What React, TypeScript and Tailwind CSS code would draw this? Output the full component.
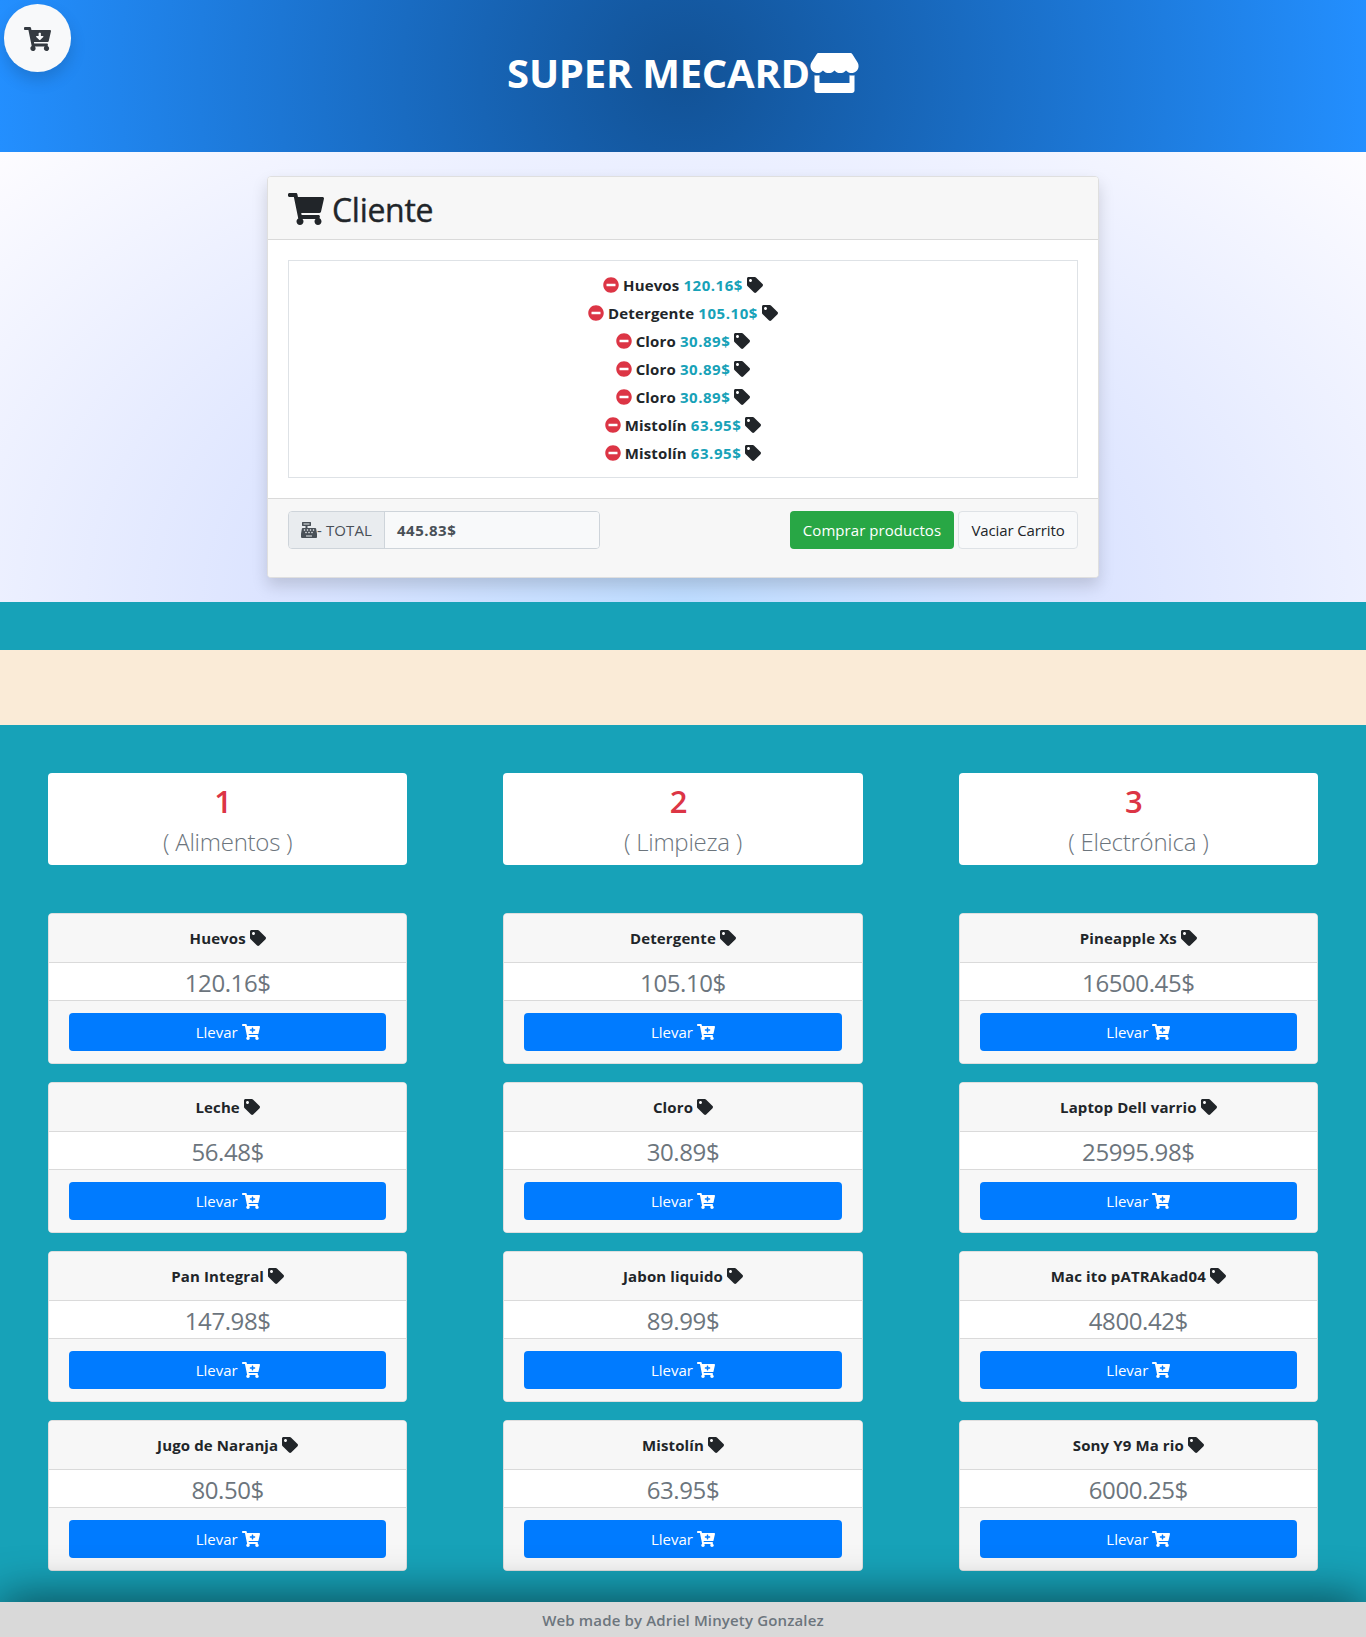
import { FaStore, FaShoppingCart, FaCartArrowDown, FaCartPlus, FaMinusCircle, FaTag, FaCashRegister } from "react-icons/fa";

const cart = [
  ["Huevos", "120.16$"],
  ["Detergente", "105.10$"],
  ["Cloro", "30.89$"],
  ["Cloro", "30.89$"],
  ["Cloro", "30.89$"],
  ["Mistolín", "63.95$"],
  ["Mistolín", "63.95$"],
];

const categories = [
  {
    id: "1",
    name: "Alimentos",
    products: [["Huevos", "120.16$"], ["Leche", "56.48$"], ["Pan Integral", "147.98$"], ["Jugo de Naranja", "80.50$"]],
  },
  {
    id: "2",
    name: "Limpieza",
    products: [["Detergente", "105.10$"], ["Cloro", "30.89$"], ["Jabon liquido", "89.99$"], ["Mistolín", "63.95$"]],
  },
  {
    id: "3",
    name: "Electrónica",
    products: [["Pineapple Xs", "16500.45$"], ["Laptop Dell varrio", "25995.98$"], ["Mac ito pATRAkad04", "4800.42$"], ["Sony Y9 Ma rio", "6000.25$"]],
  },
];

function Product({ name, price }: { name: string; price: string }) {
  return (
    <div className="mb-[18px] flex h-[151px] flex-col overflow-hidden rounded border border-[#dfdfdf] bg-white">
      <div className="flex h-[49px] items-center justify-center gap-1 border-b border-[#dadada] bg-[#f7f7f7]">
        <span className="text-[15px] font-bold tracking-[0.12px]">{name}</span>
        <FaTag className="size-4" />
      </div>
      <div className="flex h-[37px] items-center justify-center pt-0.5 text-[24px] tracking-[-0.4px] text-[#6c757d]">{price}</div>
      <div className="flex-1 border-t border-[#dadada] bg-[#f7f7f7] px-5 pt-3">
        <button className="flex h-[38px] w-full items-center justify-center gap-1 rounded bg-[#007bff] text-[15px] text-white">
          Llevar
          <FaCartPlus className="h-4 w-[18px]" />
        </button>
      </div>
    </div>
  );
}

export default function App() {
  return (
    <div className="relative flex h-[1637px] w-[1366px] flex-col overflow-hidden bg-[#17a2b8] font-['Open_Sans',sans-serif] text-base text-[#212529]">
      <button className="absolute left-1 top-1 flex h-[68px] w-[67px] items-center justify-center rounded-full bg-[#f8f9fa] pt-0.5 text-[#343a40] shadow-[0_8px_16px_rgba(0,0,0,0.15)]">
        <FaCartArrowDown className="h-6 w-[27px]" />
      </button>
      <header className="flex h-[152px] items-center justify-center bg-[radial-gradient(circle,#125296,#238fff)] pb-1.5 text-white">
        <h1 className="text-[40px] font-bold tracking-[-0.25px]">SUPER MECARD</h1>
        <FaStore className="h-10 w-[49px]" />
      </header>
      <section className="h-[450px] bg-[radial-gradient(ellipse_at_bottom,#bddcff,#dce4ff_43%,#fdfcff)] pt-6">
        <div className="mx-auto flex h-[402px] w-[832px] flex-col overflow-hidden rounded border border-[#dfdfdf] bg-white shadow-[0_8px_16px_rgba(0,0,0,0.15)]">
          <div className="flex h-[63px] items-center gap-2 border-b border-[#dadada] bg-[#f7f7f7] px-5 pt-0.5">
            <FaShoppingCart className="h-8 w-9" />
            <h2 className="pt-0.5 text-[32px] tracking-[-0.3px] [-webkit-text-stroke:0.4px_#212529]">Cliente</h2>
          </div>
          <div className="h-[258px] p-5">
            <ul className="h-[218px] border border-[#dee2e6] pt-2.5">
              {cart.map(([name, price], i) => (
                <li key={i} className="flex h-7 items-center justify-center gap-1 text-[15px] font-bold">
                  <FaMinusCircle className="size-4 text-[#dc3545]" />
                  <span className="tracking-[0.15px]">{name}</span>
                  <span className="tracking-[0.55px] text-[#17a2b8]">{price}</span>
                  <FaTag className="size-4" />
                </li>
              ))}
            </ul>
          </div>
          <div className="flex flex-1 items-start justify-between border-t border-[#dadada] bg-[#f7f7f7] px-5 pt-3">
            <div className="flex h-[38px] w-[312px] overflow-hidden rounded border border-[#ced4da] text-[15px] text-[#495057]">
              <div className="flex w-[96px] items-center border-r border-[#ced4da] bg-[#e9ecef] pl-3">
                <FaCashRegister className="size-4 shrink-0" />
                <span className="whitespace-nowrap tracking-[0.1px]">- TOTAL</span>
              </div>
              <div className="flex flex-1 items-center bg-[#f8f9fa] px-3 font-bold tracking-[0.5px]">445.83$</div>
            </div>
            <div className="flex gap-1 text-[15px]">
              <button className="h-[38px] w-[164px] rounded bg-[#28a745] tracking-[0.05px] text-white">Comprar productos</button>
              <button className="h-[38px] w-[120px] rounded border border-[#dee2e6] bg-[#f8f9fa] tracking-[-0.12px]">Vaciar Carrito</button>
            </div>
          </div>
        </div>
      </section>
      <div className="mt-12 h-[75px] bg-[#faebd7]" />
      <main className="grid h-[877px] grid-cols-3 pt-12">
        {categories.map((c) => (
          <section key={c.id} className="px-12">
            <div className="mb-12 h-[92px] rounded bg-white pt-[7px] text-center">
              <h2 className="mb-px h-[42px] pr-[9px] text-[31px] leading-[42px] font-semibold text-[#dc3545]">{c.id}</h2>
              <p className="text-[24px] leading-[38px] font-light tracking-[-0.25px] text-[#6c757d]">( {c.name} )</p>
            </div>
            {c.products.map(([name, price]) => (
              <Product key={name} name={name} price={price} />
            ))}
          </section>
        ))}
      </main>
      <footer className="relative flex h-[35px] items-center justify-center bg-[#d9d9d9] pt-0.5 text-[15px] font-semibold tracking-[0.15px] text-[#6c757d] shadow-[0_0_48px_rgba(0,0,0,0.7)]">
        Web made by Adriel Minyety Gonzalez
      </footer>
    </div>
  );
}
